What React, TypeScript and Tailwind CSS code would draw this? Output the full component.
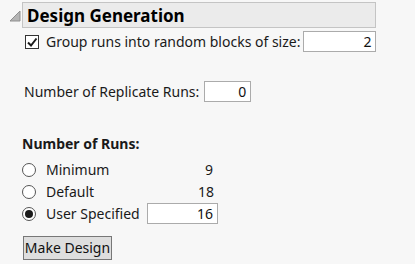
import React, { useState } from "react";

const font = { fontFamily: '"Noto Sans", "Open Sans", sans-serif' };

function NumBox({ value, className }: { value: string; className: string }) {
  return (
    <div
      className={`h-[21px] border border-[#ababab] bg-white text-right pr-[4px] leading-[19px] text-[14px] text-[#111] ${className}`}
    >
      {value}
    </div>
  );
}

function Radio({ checked }: { checked: boolean }) {
  return (
    <div className="w-[14px] h-[14px] rounded-full border border-[#555] bg-white flex items-center justify-center">
      {checked && <div className="w-[8px] h-[8px] rounded-full bg-[#1a1a1a]" />}
    </div>
  );
}

export default function App() {
  const [choice] = useState("user");

  return (
    <div
      className="w-[415px] h-[264px] bg-[#f7f7f7] text-[#1a1a1a] overflow-hidden"
      style={font}
    >
      {/* outline header */}
      <div className="flex items-end pt-[2px] pl-[9px]">
        <svg width="12" height="12" viewBox="0 0 12 12" className="mb-[6px] mr-[1px]">
          <polygon points="11,1 11,11 1,11" fill="#b5b5b5" stroke="#8f8f8f" strokeWidth="1" />
        </svg>
        <div className="w-[354px] h-[26px] bg-[#ebebeb] border border-[#c4c4c4] pl-[4px] flex items-center">
          <span className="font-bold text-[17px] leading-none text-black">Design Generation</span>
        </div>
      </div>

      {/* blocking */}
      <div className="flex items-center mt-[3px] pl-[25px]">
        <div className="w-[14px] h-[14px] border border-[#333] bg-white flex items-center justify-center">
          <svg width="12" height="12" viewBox="0 0 12 12">
            <path d="M2 6.5 L5 9.5 L10.5 2.5" fill="none" stroke="#1a1a1a" strokeWidth="2" />
          </svg>
        </div>
        <span className="ml-[7px] text-[14px]">Group runs into random blocks of size:</span>
        <NumBox value="2" className="ml-[3px] w-[73px]" />
      </div>

      {/* replicates */}
      <div className="flex items-center mt-[29px] pl-[24px]">
        <span className="text-[14px]">Number of Replicate Runs:</span>
        <NumBox value="0" className="ml-[5px] w-[47px]" />
      </div>

      {/* number of runs */}
      <div className="pl-[22px] mt-[34px]">
        <div className="font-bold text-[14px] leading-[16px]">Number of Runs:</div>
        <div className="grid grid-cols-[125px_71px] mt-[7px] gap-y-[1px] items-center">
          <div className="flex items-center h-[21px]">
            <Radio checked={choice === "min"} />
            <span className="ml-[10px] text-[14px]">Minimum</span>
          </div>
          <div className="text-right pr-[5px] text-[14px]">9</div>
          <div className="flex items-center h-[21px]">
            <Radio checked={choice === "default"} />
            <span className="ml-[10px] text-[14px]">Default</span>
          </div>
          <div className="text-right pr-[4px] text-[14px]">18</div>
          <div className="flex items-center h-[21px]">
            <Radio checked={choice === "user"} />
            <span className="ml-[10px] text-[14px]">User Specified</span>
          </div>
          <NumBox value="16" className="w-[71px]" />
        </div>
        <button className="mt-[12px] ml-[1px] w-[89px] h-[24px] bg-[#dedede] border border-[#777] text-[14px] leading-none text-[#111]">
          Make Design
        </button>
      </div>
    </div>
  );
}
